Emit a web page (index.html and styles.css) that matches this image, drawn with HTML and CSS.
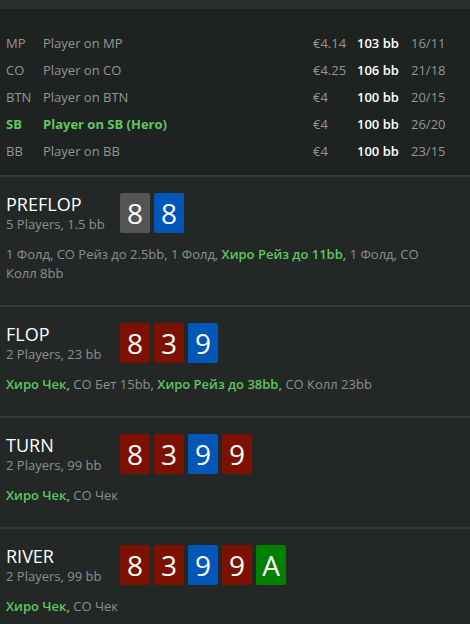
FILE: index.html
```html
<!DOCTYPE html>
<html>
<head>
<meta charset="utf-8">
<link rel="stylesheet" href="styles.css">
</head>
<body>
<div class="topbar"></div>
<div class="players">
  <div class="prow"><span class="pos">MP</span><span class="name">Player on MP</span><span class="money">€4.14</span><span class="stack">103 bb</span><span class="stats">16/11</span></div>
  <div class="prow"><span class="pos">CO</span><span class="name">Player on CO</span><span class="money">€4.25</span><span class="stack">106 bb</span><span class="stats">21/18</span></div>
  <div class="prow"><span class="pos">BTN</span><span class="name">Player on BTN</span><span class="money">€4</span><span class="stack">100 bb</span><span class="stats">20/15</span></div>
  <div class="prow hero"><span class="pos">SB</span><span class="name">Player on SB (Hero)</span><span class="money">€4</span><span class="stack">100 bb</span><span class="stats">26/20</span></div>
  <div class="prow"><span class="pos">BB</span><span class="name">Player on BB</span><span class="money">€4</span><span class="stack">100 bb</span><span class="stats">23/15</span></div>
</div>

<div class="street">
  <div class="street-head">
    <div class="street-info">
      <div class="street-title">PREFLOP</div>
      <div class="street-sub">5 Players, 1.5 bb</div>
    </div>
    <div class="cards">
      <div class="card c-gray">8</div>
      <div class="card c-blue">8</div>
    </div>
  </div>
  <div class="actions">1 Фолд, CO Рейз до 2.5bb, 1 Фолд, <b class="hero-act">Хиро Рейз до 11bb,</b> 1 Фолд, CO Колл 8bb</div>
</div>

<div class="street">
  <div class="street-head">
    <div class="street-info">
      <div class="street-title">FLOP</div>
      <div class="street-sub">2 Players, 23 bb</div>
    </div>
    <div class="cards">
      <div class="card c-red">8</div>
      <div class="card c-red">3</div>
      <div class="card c-blue">9</div>
    </div>
  </div>
  <div class="actions"><b class="hero-act">Хиро Чек,</b> CO Бет 15bb, <b class="hero-act">Хиро Рейз до 38bb,</b> CO Колл 23bb</div>
</div>

<div class="street">
  <div class="street-head">
    <div class="street-info">
      <div class="street-title">TURN</div>
      <div class="street-sub">2 Players, 99 bb</div>
    </div>
    <div class="cards">
      <div class="card c-red">8</div>
      <div class="card c-red">3</div>
      <div class="card c-blue">9</div>
      <div class="card c-red">9</div>
    </div>
  </div>
  <div class="actions"><b class="hero-act">Хиро Чек,</b> CO Чек</div>
</div>

<div class="street">
  <div class="street-head">
    <div class="street-info">
      <div class="street-title">RIVER</div>
      <div class="street-sub">2 Players, 99 bb</div>
    </div>
    <div class="cards">
      <div class="card c-red">8</div>
      <div class="card c-red">3</div>
      <div class="card c-blue">9</div>
      <div class="card c-red">9</div>
      <div class="card c-green">A</div>
    </div>
  </div>
  <div class="actions"><b class="hero-act">Хиро Чек,</b> CO Чек</div>
</div>
</body>
</html>
```

FILE: styles.css
```css
* { box-sizing: border-box; }
html, body {
  margin: 0;
  padding: 0;
  background: #232827;
  font-family: "Open Sans", "Noto Sans", sans-serif;
  font-size: 13px;
  color: #8e8e8e;
}
.topbar {
  height: 9px;
  background: #292d2d;
}
.players {
  background: #1e2221;
  padding: 21px 0 10px 0;
  border-bottom: 2px solid #353938;
}
.prow {
  display: flex;
  align-items: center;
  height: 27px;
  line-height: 27px;
  color: #959595;
}
.pos { width: 43px; padding-left: 6px; }
.name { flex: 1; }
.money { width: 44px; }
.stack { width: 54px; color: #ffffff; font-weight: 600; }
.stats { width: 59px; }
.prow.hero .pos, .prow.hero .name { color: #5ec75e; font-weight: 700; }

.street {
  padding: 16px 6px 22px 6px;
  border-bottom: 2px solid #353938;
}
.street:last-child { border-bottom: none; }
.street-head {
  display: flex;
  align-items: center;
}
.street-info {
  width: 114px;
}
.street-title {
  color: #ffffff;
  font-size: 18px;
  line-height: 22px;
}
.street-sub {
  font-size: 13px;
  line-height: 18px;
}
.cards {
  display: flex;
  gap: 4px;
}
.card {
  width: 30px;
  height: 40px;
  border-radius: 2px;
  color: #ffffff;
  font-size: 28px;
  line-height: 40px;
  text-align: center;
}
.c-gray { background: #555555; }
.c-blue { background: #0057b7; }
.c-red { background: #7c1100; }
.c-green { background: #007f00; }
.actions {
  margin-top: 12px;
  max-width: 420px;
  font-size: 13px;
  line-height: 19px;
  color: #8e8e8e;
}
.hero-act { color: #5ec75e; font-weight: 600; }
```
